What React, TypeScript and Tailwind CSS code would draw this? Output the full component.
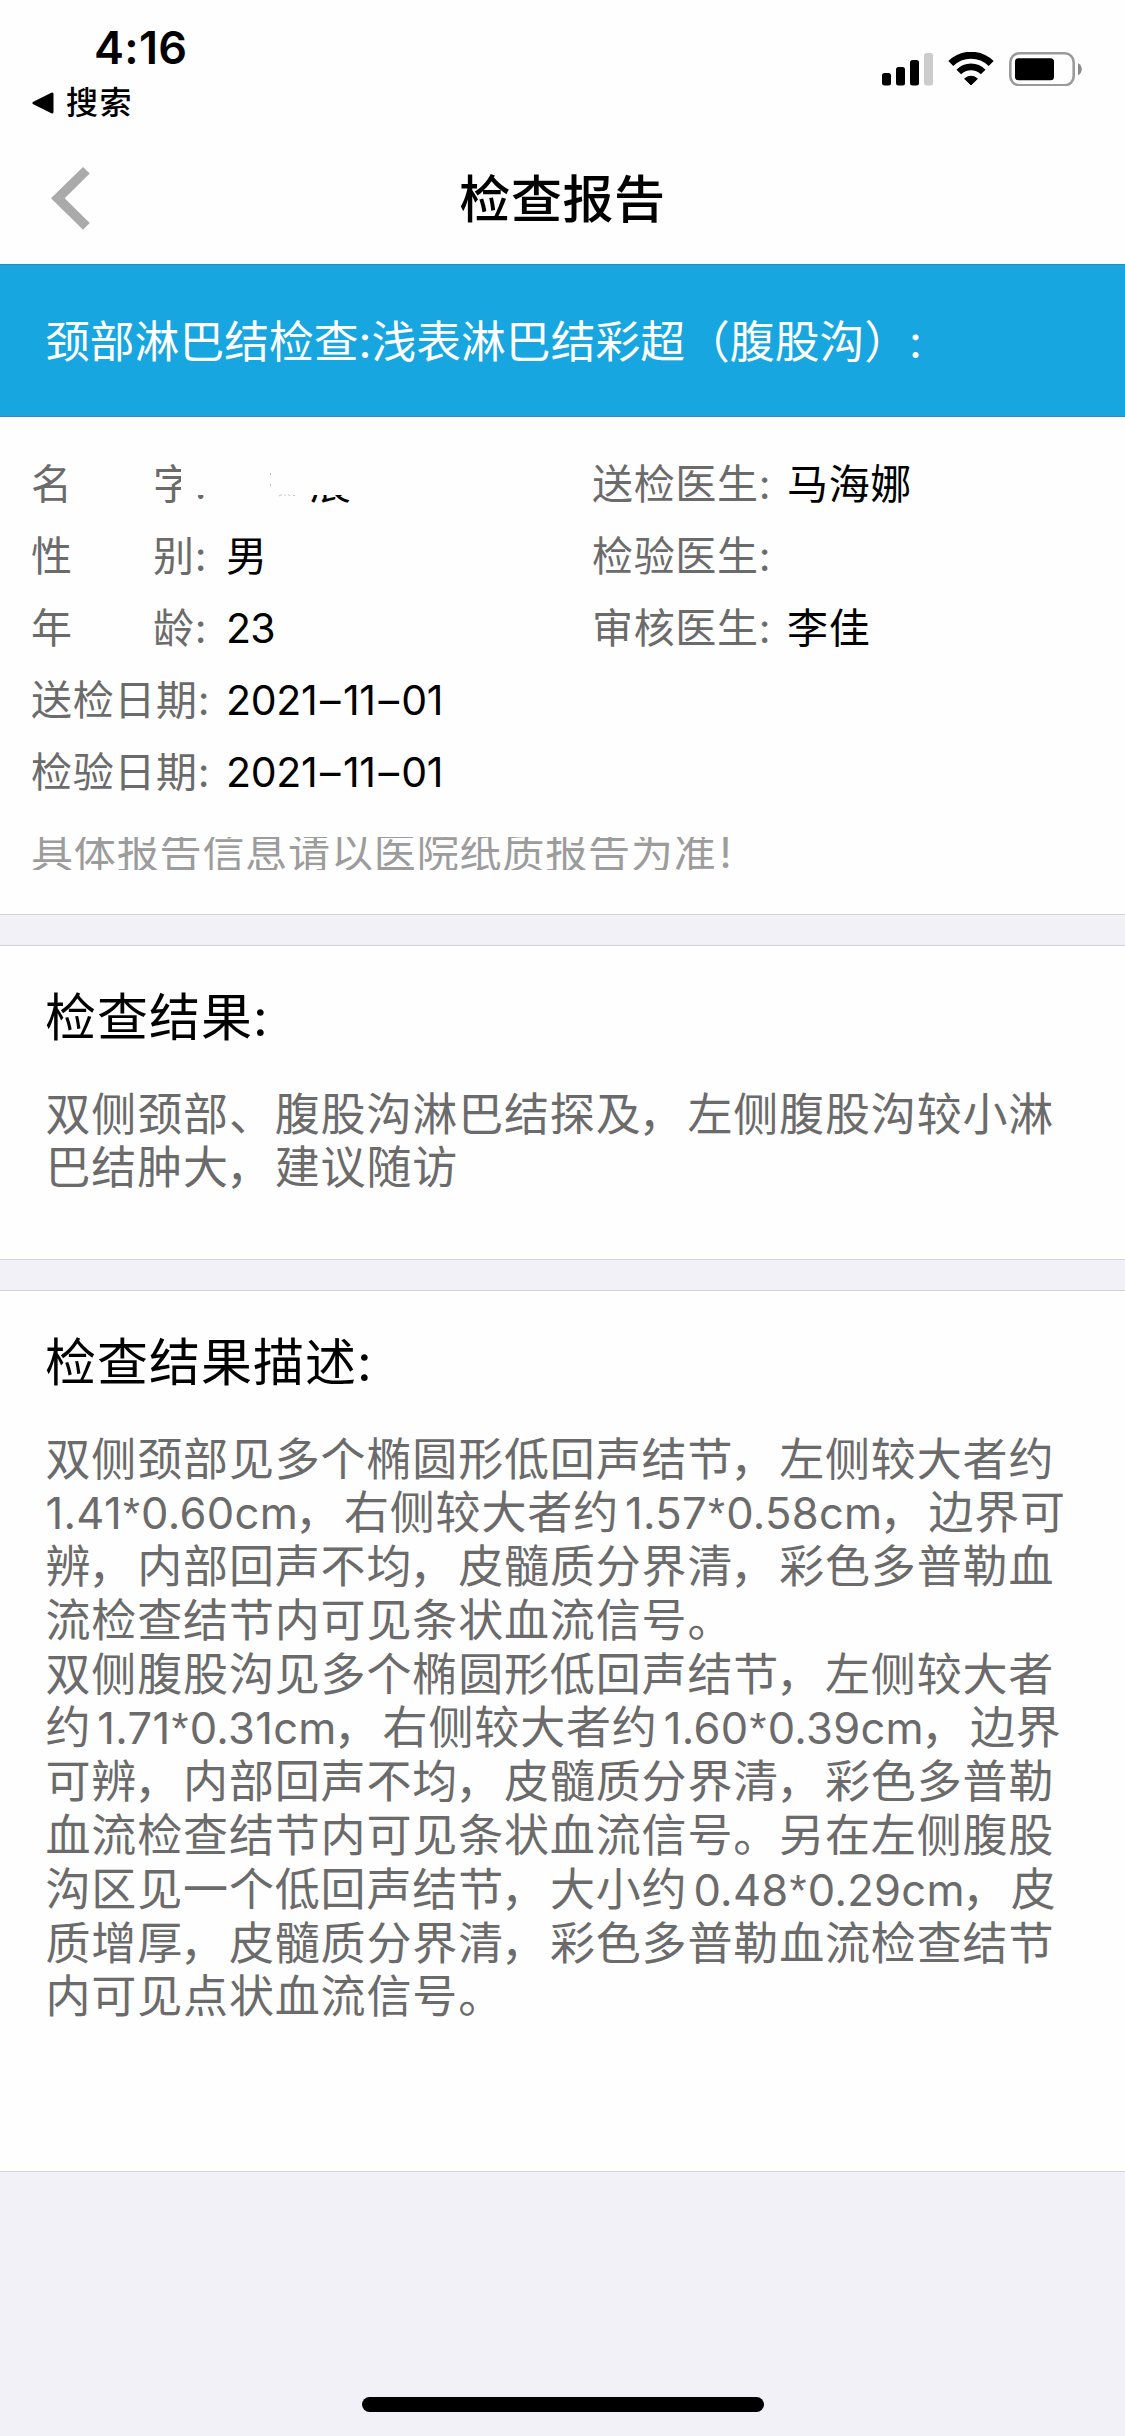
import type { ReactNode } from 'react';

const doctors = [
  { label: '送检医生:', value: '马海娜' },
  { label: '检验医生:', value: '' },
  { label: '审核医生:', value: '李佳' },
];

const resultLines = ['双侧颈部、腹股沟淋巴结探及，左侧腹股沟较小淋', '巴结肿大，建议随访'];

const descriptionLines = [
  '双侧颈部见多个椭圆形低回声结节，左侧较大者约',
  '1.41*0.60cm，右侧较大者约1.57*0.58cm，边界可',
  '辨，内部回声不均，皮髓质分界清，彩色多普勒血',
  '流检查结节内可见条状血流信号。',
  '双侧腹股沟见多个椭圆形低回声结节，左侧较大者',
  '约1.71*0.31cm，右侧较大者约1.60*0.39cm，边界',
  '可辨，内部回声不均，皮髓质分界清，彩色多普勒',
  '血流检查结节内可见条状血流信号。另在左侧腹股',
  '沟区见一个低回声结节，大小约0.48*0.29cm，皮',
  '质增厚，皮髓质分界清，彩色多普勒血流检查结节',
  '内可见点状血流信号。',
];

function StatusBar() {
  return (
    <div className="flex h-[132px] justify-between">
      <div className="pt-[21px] pl-[32px]">
        <div className="pl-[62px] text-[45px] leading-[54px] font-semibold tracking-[0.3px]">4:16</div>
        <div className="mt-[3px] flex items-center">
          <svg width="22" height="22" viewBox="0 0 22 22">
            <path d="M2 11 L20 2 V20 Z" stroke="#000" strokeWidth="3" strokeLinejoin="round" />
          </svg>
          <span className="ml-[12px] text-[32px] leading-[50px] font-medium tracking-[1.4px]">搜索</span>
        </div>
      </div>
      <div className="flex items-start pt-[52px] pr-[43px]">
        <svg width="52" height="34" viewBox="0 0 52 34">
          <rect x="0" y="21" width="9" height="12.5" rx="2.5" />
          <rect x="14" y="15" width="9" height="18.5" rx="2.5" />
          <rect x="28" y="8" width="9" height="25.5" rx="2.5" />
          <rect x="42" y="1" width="9" height="32.5" rx="2.5" fill="#ccc" />
        </svg>
        <svg className="ml-[14px]" width="46" height="34" viewBox="0 0 46 34" fill="none" stroke="#000">
          <path d="M2.8 11.6 A28.6 28.6 0 0 1 43.2 11.6" strokeWidth="7" />
          <path d="M10.8 20 A17.2 17.2 0 0 1 35.2 20" strokeWidth="6.6" />
          <path d="M23 33 L16.6 26.8 A9.2 9.2 0 0 1 29.4 26.8 Z" fill="#000" strokeWidth="1" strokeLinejoin="round" />
        </svg>
        <svg className="ml-[15px]" width="73" height="34" viewBox="0 0 73 34">
          <rect x="1.3" y="1.3" width="63.4" height="31.9" rx="9" fill="none" stroke="#9a9a9a" strokeWidth="2.6" />
          <rect x="6" y="6.3" width="39" height="22" rx="3.5" />
          <path d="M69 11.3 C74 13.5 74 21 69 23.2 Z" fill="#8a8a8a" />
        </svg>
      </div>
    </div>
  );
}

function Row({ label, value }: { label: ReactNode; value: ReactNode }) {
  return (
    <div className="flex h-[72px] items-center whitespace-nowrap">
      <span className="flex w-[195px] text-[#6b6b6b]">{label}</span>
      <span>{value}</span>
    </div>
  );
}

function Spaced({ first, second }: { first: string; second: string }) {
  return (
    <>
      <span className="w-[122px]">{first}</span>
      <span>{second}:</span>
    </>
  );
}

function ReportDate({ value }: { value: string }) {
  const [year, month, day] = value.split('-');
  return (
    <span className="tracking-[-0.3px]">
      {year}
      <span className="mx-[2.7px]">–</span>
      {month}
      <span className="mx-[2.7px]">–</span>
      {day}
    </span>
  );
}

function Measurement({ value, leading }: { value: string; leading: boolean }) {
  const [width, height] = value.split('*');
  return (
    <span className={`text-[43.5px] tracking-[0.3px] ${leading ? '' : 'ml-[6px]'}`}>
      {width}
      <span className="mx-px font-['Liberation_Sans']">*</span>
      {height}
    </span>
  );
}

// measurements are set a little smaller than the Chinese text, commas sit closer to it
function Lines({ lines }: { lines: string[] }) {
  return (
    <div className="pl-[0.5px] text-[45px] leading-[53.8px] tracking-[0.85px] whitespace-nowrap text-[#6b6b6b]">
      {lines.map((line) => (
        <p key={line} className="h-[53.8px]">
          {line.split(/([\d.*cm]+|，)/).map((part, i) => {
            if (part === '，') {
              return <span key={i} className="-ml-[3px] mr-[3px]">{part}</span>;
            }
            if (/^\d/.test(part)) {
              return <Measurement key={i} value={part} leading={line.startsWith(part)} />;
            }
            return part;
          })}
        </p>
      ))}
    </div>
  );
}

export default function App() {
  return (
    <div
      lang="zh-CN"
      className="flex h-[2436px] w-[1125px] flex-col overflow-hidden bg-[#f2f1f8] font-['Inter','Noto_Sans_CJK_SC',sans-serif] text-black"
    >
      <header className="h-[264px] bg-[#fefefe]">
        <StatusBar />
        <div className="grid h-[132px] grid-cols-[200px_1fr_200px] items-center">
          <svg className="ml-[51px]" width="39" height="63" viewBox="0 0 39 63">
            <path d="M32 0 L38.7 6.5 L13.7 31.3 L38.7 56 L32 62.8 L0 31.3 Z" fill="#aaa" />
          </svg>
          <h1 className="pt-[4px] text-center text-[51px] font-medium tracking-[0.6px]">检查报告</h1>
        </div>
      </header>

      <div className="flex h-[153px] items-center border-y border-[#2b8db8] bg-[#18a6e0] pt-[5px] pl-[45px] text-[44.8px] whitespace-nowrap text-white">
        颈部淋巴结检查:浅表淋巴结彩超（腹股沟）:
      </div>

      <section className="h-[498px] border-b border-[#d2d2d6] bg-[#fefefe] pt-[32px] pl-[31px] text-[41px] tracking-[0.67px]">
        <div className="flex">
          <div className="relative w-[561px]">
            <Row label={<Spaced first="名" second="字" />} value={<span className="pl-[84px]">展</span>} />
            <Row label={<Spaced first="性" second="别" />} value="男" />
            <Row label={<Spaced first="年" second="龄" />} value={<span className="tracking-[-0.8px]">23</span>} />
            <Row label="送检日期:" value={<ReportDate value="2021-11-01" />} />
            <Row label="检验日期:" value={<ReportDate value="2021-11-01" />} />
            {/* name is masked, only the lower edge of it shows */}
            <div className="absolute top-0 left-[150px] h-[46px] w-[260px] bg-[#fefefe]" />
            <svg className="absolute top-[22px] left-[238px]" width="32" height="26" viewBox="0 0 32 26" stroke="#c4c4c4">
              <path d="M1.5 2 V4 M1.5 13 V15 M10 25 L13 23.5 M16 23.5 V25 M19 23.5 L21 25 M24 24.5 H26" />
            </svg>
          </div>
          <div>
            {doctors.map((d) => (
              <Row key={d.label} label={d.label} value={d.value} />
            ))}
          </div>
        </div>
        <div className="mt-[27.5px] flex h-[33px] items-center overflow-hidden text-[42px] leading-[42px] tracking-[0.85px] whitespace-nowrap text-[#9c9c9c]">
          具体报告信息请以医院纸质报告为准<span className="ml-[3px]">!</span>
        </div>
      </section>

      <section className="mt-[30px] h-[315px] border-y border-[#d2d2d6] bg-[#fefefe] pt-[36.5px] pl-[45px]">
        <h2 className="mb-[35px] text-[51px] leading-[70px] tracking-[1px]">检查结果:</h2>
        <Lines lines={resultLines} />
      </section>

      <section className="mt-[30px] h-[882px] border-y border-[#d2d2d6] bg-[#fefefe] pt-[36.5px] pl-[45px]">
        <h2 className="mb-[35px] text-[51px] leading-[70px] tracking-[1px]">检查结果描述:</h2>
        <Lines lines={descriptionLines} />
      </section>

      <div className="mx-auto mt-auto mb-[24px] h-[15px] w-[402px] rounded-full bg-black" />
    </div>
  );
}
